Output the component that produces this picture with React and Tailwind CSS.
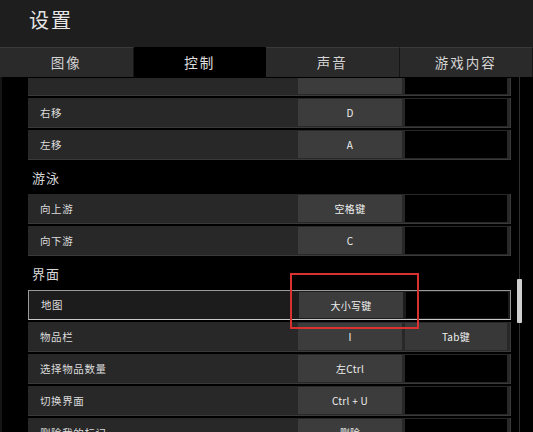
const tabs = ['图像', '控制', '声音', '游戏内容'];

const sections = [
  {
    title: '游泳',
    rows: [
      { label: '向上游', key1: '空格键' },
      { label: '向下游', key1: 'C' },
    ],
  },
  {
    title: '界面',
    rows: [
      { label: '地图', key1: '大小写键', selected: true },
      { label: '物品栏', key1: 'I', key2: 'Tab键' },
      { label: '选择物品数量', key1: '左Ctrl' },
      { label: '切换界面', key1: 'Ctrl + U' },
      { label: '删除我的标记', key1: '删除' },
    ],
  },
];

function KeyRow({ label, key1, key2, selected, stub }) {
  return (
    <div
      className={`flex items-stretch mb-[2px] shrink-0 ${
        stub ? 'h-[18px]' : 'h-[30px]'
      } ${
        selected
          ? 'border border-[#9a9a9a] border-b-[#c8c8c8] bg-[#1c1c1c]'
          : 'border-b border-r border-[#3a3a3a] bg-[#282828]'
      }`}
    >
      <div className="w-[270px] flex items-center pl-[12px] text-[10.5px] tracking-[0.6px] text-[#dcdcdc]">
        {label}
      </div>
      <div className={`flex ${stub ? 'pb-[1px]' : 'py-[1px]'} pr-[2px] gap-[3px]`}>
        <div className="w-[104px] bg-[#3c3c3c] flex items-center justify-center text-[10px] tracking-[0.3px] text-[#eeeeee]">
          {key1}
        </div>
        <div
          className={`w-[102px] flex items-center justify-center text-[10px] tracking-[0.3px] text-[#eeeeee] ${
            key2 ? 'bg-[#383838]' : 'bg-black'
          }`}
        >
          {key2}
        </div>
      </div>
    </div>
  );
}

export default function App() {
  return (
    <div
      className="w-[533px] h-[432px] bg-black flex flex-col overflow-hidden relative"
      style={{ fontFamily: '"Noto Sans CJK SC", "Noto Sans", sans-serif' }}
    >
      {/* Header */}
      <div className="h-[47px] shrink-0 bg-[#1e1e1e] pl-[29px] pt-[5px] text-[20px] text-[#e6e6e6] tracking-[2px]">
        设置
      </div>

      {/* Tabs */}
      <div className="h-[30px] shrink-0 flex">
        {tabs.map((t, i) => (
          <div
            key={t}
            className={`flex-1 flex items-center justify-center text-[13.5px] tracking-[2px] ${
              i === 1
                ? 'bg-black text-[#e0e0e0]'
                : 'bg-[#2a2a2a] text-[#d4d4d4] border-t border-[#3a3a3a] border-r border-r-[#151515]'
            }`}
          >
            {t}
          </div>
        ))}
      </div>

      {/* Content */}
      <div className="flex-1 flex min-h-0 border-l-2 border-[#151515]">
        <div className="w-[509px] pl-[26px] pt-[1px] flex flex-col overflow-hidden">
          <KeyRow stub label="" key1="" />
          <KeyRow label="右移" key1="D" />
          <KeyRow label="左移" key1="A" />
          {sections.map((s) => (
            <div key={s.title} className="flex flex-col">
              <div className="h-[32px] shrink-0 flex items-center pl-[4px] text-[13px] text-[#d8d8d8] tracking-[1px]">
                {s.title}
              </div>
              {s.rows.map((r) => (
                <KeyRow key={r.label} {...r} />
              ))}
            </div>
          ))}
        </div>

        {/* Scrollbar */}
        <div className="w-[5px] ml-[6px] relative flex justify-center">
          <div className="w-px h-full bg-[#2e2e2e]" />
          <div className="absolute left-0 top-[202px] w-[5px] h-[44px] bg-[#cfcfcf] rounded-[1px]" />
        </div>
      </div>

      {/* Annotation box */}
      <div className="absolute left-[290px] top-[273px] w-[129px] h-[56px] border-2 border-[#d8312f]" />
    </div>
  );
}
